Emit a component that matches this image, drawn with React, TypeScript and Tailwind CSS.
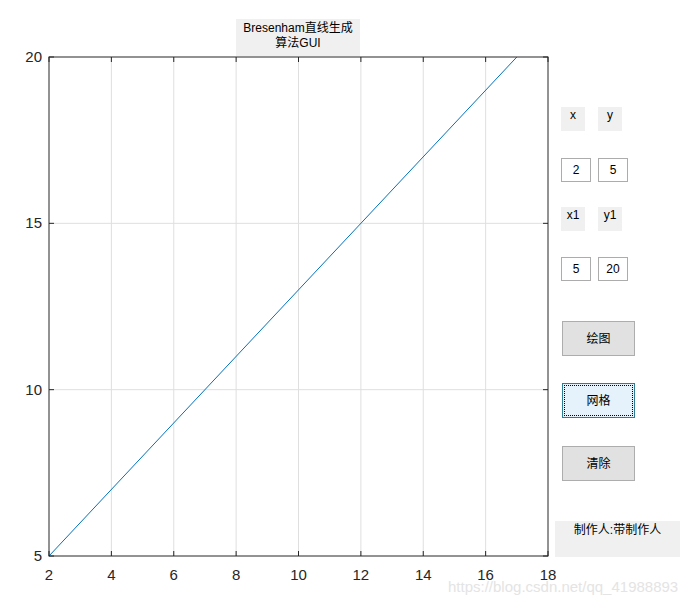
import React from 'react';

const L = 49;
const R = 548;
const T = 57;
const B = 556;
const X0 = 2;
const X1 = 18;
const Y0 = 5;
const Y1 = 20;

const px = (x: number) => L + ((x - X0) / (X1 - X0)) * (R - L);
const py = (y: number) => B - ((y - Y0) / (Y1 - Y0)) * (B - T);

const xTicks = [2, 4, 6, 8, 10, 12, 14, 16, 18];
const yTicks = [5, 10, 15, 20];

const axisFont = '"Liberation Sans", Arial, sans-serif';
const uiFont = '"Liberation Sans", "Noto Sans CJK SC", sans-serif';

function Plot() {
  return (
    <svg width={555} height={550} viewBox="0 56 555 550" className="block overflow-visible">
      {/* grid */}
      {xTicks.slice(1, -1).map((x) => (
        <line key={'gx' + x} x1={px(x)} x2={px(x)} y1={T} y2={B} stroke="#dfdfdf" strokeWidth={1} />
      ))}
      {yTicks.slice(1, -1).map((y) => (
        <line key={'gy' + y} x1={L} x2={R} y1={py(y)} y2={py(y)} stroke="#dfdfdf" strokeWidth={1} />
      ))}
      {/* data */}
      <line x1={px(2)} y1={py(5)} x2={px(17)} y2={py(20)} stroke="#0072bd" strokeWidth={1} />
      {/* box */}
      <rect x={L} y={T} width={R - L} height={B - T} fill="none" stroke="#262626" strokeWidth={1} />
      {/* ticks */}
      {xTicks.map((x) => (
        <g key={'tx' + x}>
          <line x1={px(x)} x2={px(x)} y1={B} y2={B - 5} stroke="#262626" />
          <line x1={px(x)} x2={px(x)} y1={T} y2={T + 5} stroke="#262626" />
          <text x={px(x)} y={580} textAnchor="middle" fontSize={15} fill="#262626" fontFamily={axisFont}>
            {x}
          </text>
        </g>
      ))}
      {yTicks.map((y) => (
        <g key={'ty' + y}>
          <line x1={L} x2={L + 5} y1={py(y)} y2={py(y)} stroke="#262626" />
          <line x1={R} x2={R - 5} y1={py(y)} y2={py(y)} stroke="#262626" />
          <text x={42} y={py(y) + 5} textAnchor="end" fontSize={15} fill="#262626" fontFamily={axisFont}>
            {y}
          </text>
        </g>
      ))}
    </svg>
  );
}

function Label({ children }: { children: React.ReactNode }) {
  return (
    <div className="w-[24px] h-[24px] bg-[#f0f0f0] text-[12px] leading-[16px] text-center text-black">{children}</div>
  );
}

function Edit({ children }: { children: React.ReactNode }) {
  return (
    <div className="w-[30px] h-[24px] bg-white border border-[#acacac] text-[12px] leading-[22px] text-center text-black">
      {children}
    </div>
  );
}

function Btn({ children, focused }: { children: React.ReactNode; focused?: boolean }) {
  if (focused) {
    return (
      <div className="w-[73px] h-[35px] ml-[7px] bg-[#e5f1fb] border border-[#2f7d94] p-[1px]">
        <div className="w-full h-full border border-dotted border-black flex items-center justify-center text-[12px] text-black">
          {children}
        </div>
      </div>
    );
  }
  return (
    <div className="w-[73px] h-[35px] ml-[7px] bg-[#e1e1e1] border border-[#adadad] flex items-center justify-center text-[12px] text-black">
      {children}
    </div>
  );
}

export default function App() {
  return (
    <div className="relative w-[700px] h-[606px] bg-white flex overflow-hidden" style={{ fontFamily: uiFont }}>
      <div className="w-[555px] flex flex-col">
        <div className="mt-[19px] ml-[236px] w-[124px] h-[37px] bg-[#f0f0f0] text-[12px] leading-[15px] text-center text-black pt-[2px]">
          Bresenham直线生成
          <br />
          算法GUI
        </div>
        <Plot />
      </div>
      <div className="flex flex-col">
        <div className="mt-[107px] ml-[6px] flex gap-[13px]">
          <Label>x</Label>
          <Label>y</Label>
        </div>
        <div className="mt-[27px] ml-[6px] flex gap-[7px]">
          <Edit>2</Edit>
          <Edit>5</Edit>
        </div>
        <div className="mt-[25px] ml-[6px] flex gap-[13px]">
          <Label>x1</Label>
          <Label>y1</Label>
        </div>
        <div className="mt-[26px] ml-[6px] flex gap-[7px]">
          <Edit>5</Edit>
          <Edit>20</Edit>
        </div>
        <div className="mt-[40px]">
          <Btn>绘图</Btn>
        </div>
        <div className="mt-[27px]">
          <Btn focused>网格</Btn>
        </div>
        <div className="mt-[28px]">
          <Btn>清除</Btn>
        </div>
        <div className="mt-[40px] w-[125px] h-[36px] bg-[#f0f0f0] text-[12px] leading-[16px] text-center text-black pt-[1px]">
          制作人:带制作人
        </div>
      </div>
      <div className="absolute left-[448px] top-[576px] text-[15px] text-[#e4e4e4] whitespace-nowrap" style={{ fontFamily: axisFont }}>
        https://blog.csdn.net/qq_41988893
      </div>
    </div>
  );
}
